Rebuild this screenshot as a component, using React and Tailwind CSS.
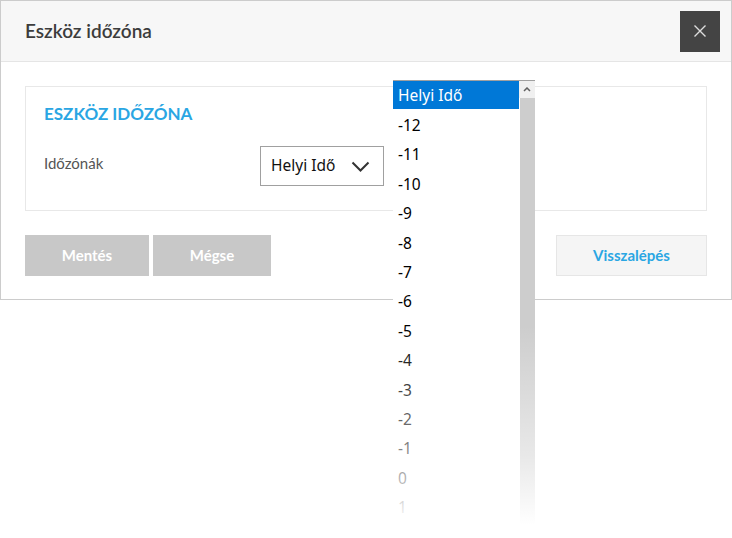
import React from "react";

const zones = ["-12", "-11", "-10", "-9", "-8", "-7", "-6", "-5", "-4", "-3", "-2", "-1", "0", "1"];

const App = () => {
  return (
    <div className="relative w-[732px] h-[538px] bg-white overflow-hidden font-['Lato','Noto_Sans',sans-serif]">
      <div className="w-[732px] border border-[#cccccc] bg-white">
        <div className="h-[61px] bg-[#f7f7f7] border-b border-[#e5e5e5] flex items-center justify-between pl-[24px] pr-[11px]">
          <h1 className="text-[19px] text-[#3c3c3c] font-semibold">Eszköz időzóna</h1>
          <button className="w-[40px] h-[41px] bg-[#444444] flex items-center justify-center">
            <svg width="14" height="14" viewBox="0 0 14 14">
              <path d="M1.5 1.5 L12.5 12.5 M12.5 1.5 L1.5 12.5" stroke="#dddddd" strokeWidth="1.4" />
            </svg>
          </button>
        </div>

        <div className="pt-[24px] pl-[24px] pr-[24px] pb-[23px]">
          <div className="border border-[#e8e8e8] h-[125px] pl-[18px] pt-[16px]">
            <h2 className="text-[17px] font-bold text-[#2aa6e3] leading-[22px]">ESZKÖZ IDŐZÓNA</h2>
            <div className="flex items-center mt-[21px]">
              <span className="w-[216px] text-[15px] text-[#555555] -mt-[6px]">Időzónák</span>
              <div className="w-[124px] h-[40px] border border-[#a0a0a0] flex items-center justify-between pl-[10px] pr-[13px] font-['Noto_Sans',sans-serif] text-[15.5px] text-[#111111]">
                <span>Helyi Idő</span>
                <svg width="19" height="11" viewBox="0 0 19 11">
                  <path d="M1.5 1.5 L9.5 9.5 L17.5 1.5" fill="none" stroke="#333333" strokeWidth="2" />
                </svg>
              </div>
            </div>
          </div>

          <div className="flex items-center mt-[24px]">
            <button className="w-[124px] h-[41px] bg-[#c8c8c8] text-white font-bold text-[15px]">Mentés</button>
            <button className="w-[118px] h-[41px] bg-[#c8c8c8] text-white font-bold text-[15px] ml-[4px]">Mégse</button>
            <button className="ml-auto w-[151px] h-[41px] bg-[#f5f5f5] border border-[#e6e6e6] text-[#2aa6e3] font-bold text-[15px]">
              Visszalépés
            </button>
          </div>
        </div>
      </div>

      {/* open select list */}
      <div className="absolute left-[393px] top-[80px] w-[142px] h-[444px] overflow-hidden bg-white border-t border-[#a0a0a0] flex font-['Noto_Sans',sans-serif] text-[15.5px]">
        <div className="w-[126px]">
          <div className="h-[28px] bg-[#0078d7] text-white pl-[5px] leading-[28px]">Helyi Idő</div>
          <div className="pt-[2px]">
            {zones.map((z) => (
              <div key={z} className="h-[29.4px] leading-[29.4px] pl-[5px] text-black">
                {z}
              </div>
            ))}
          </div>
        </div>
        <div className="w-[16px] flex flex-col">
          <div className="h-[17px] bg-[#f0f0f0] flex items-center justify-center">
            <svg width="8" height="5" viewBox="0 0 8 5">
              <path d="M1 4 L4 1 L7 4" fill="none" stroke="#606060" strokeWidth="1.5" />
            </svg>
          </div>
          <div className="flex-1 bg-[#cdcdcd] ml-[1px]"></div>
        </div>
        <div className="absolute left-0 right-0 top-[245px] h-[199px] bg-[linear-gradient(to_bottom,rgba(255,255,255,0)_0%,rgba(255,255,255,0.55)_65%,rgba(255,255,255,1)_100%)]"></div>
      </div>
    </div>
  );
};

export default App;
